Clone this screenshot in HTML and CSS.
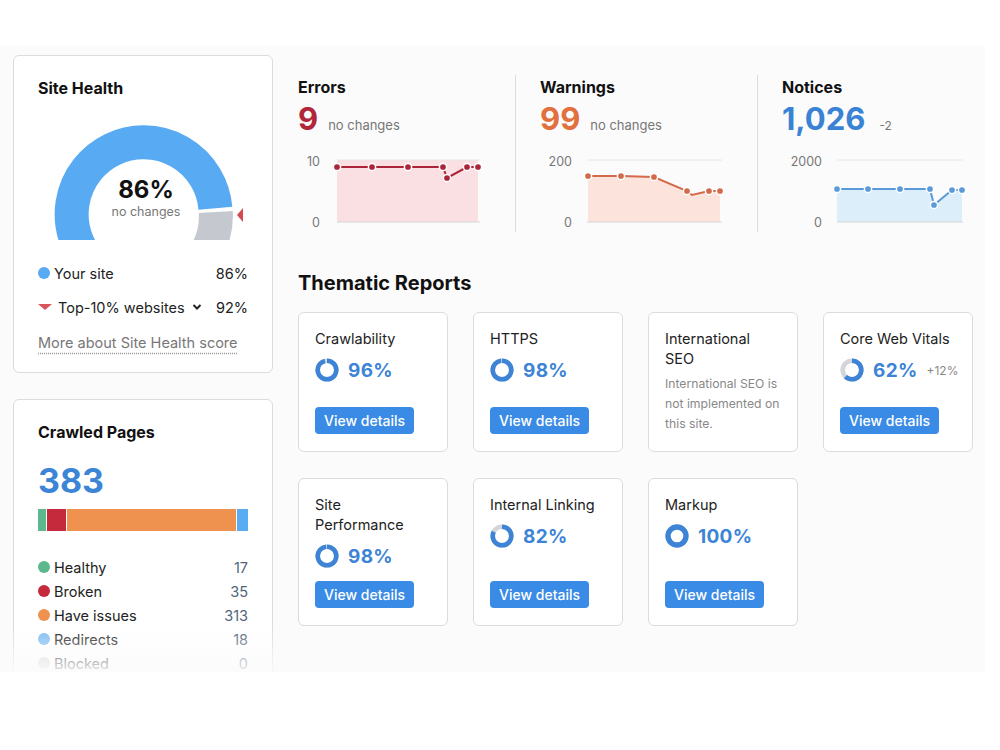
FILE: index.html
```html
<!DOCTYPE html>
<html lang="en">
<head>
  <meta charset="UTF-8">
  <meta name="viewport" content="width=device-width, initial-scale=1.0">
  <title>Site Audit</title>
  <link rel="stylesheet" href="styles.css">
</head>
<body>
<div class="shot">
  <div class="layout">
    <aside class="side">
      <section class="card health">
        <h3 class="card-title">Site Health</h3>
        <svg class="gauge" width="210" height="120" viewBox="0 0 210 120">
          <path d="M56.3 146.7 A72 72 0 1 1 177.4 88.2" fill="none" stroke="#58aaf3" stroke-width="34"/>
          <path d="M177.8 92 A72 72 0 0 1 157 146.7" fill="none" stroke="#c5c8cf" stroke-width="34"/>
          <polygon points="199,95 205,88 205,102" fill="#d44b4f"/>
          <text x="108" y="78" text-anchor="middle" class="gauge-value">86%</text>
          <text x="108" y="96" text-anchor="middle" class="gauge-sub">no changes</text>
        </svg>
        <div class="legend-row tall">
          <span class="dot" style="background:#58aaf3"></span>
          <span class="legend-name">Your site</span>
          <span class="legend-value">86%</span>
        </div>
        <div class="legend-row tall">
          <svg class="tri" width="14" height="8" viewBox="0 0 14 8"><polygon points="0,1 14,1 7,7" fill="#d9545c"/></svg>
          <span class="legend-name">Top-10% websites</span>
          <svg class="chev" width="10" height="8" viewBox="0 0 10 8"><path d="M1.5 2 L5 5.5 L8.5 2" fill="none" stroke="#222" stroke-width="2"/></svg>
          <span class="legend-value">92%</span>
        </div>
        <a class="more" href="#">More about Site Health score</a>
      </section>

      <section class="card crawled">
        <h3 class="card-title">Crawled Pages</h3>
        <div class="big-num">383</div>
        <div class="pages-bar">
          <span style="width:8px;background:#5cb98e"></span>
          <span style="width:19px;background:#c42a3b"></span>
          <span style="width:169px;background:#f0924f"></span>
          <span style="width:11px;background:#5aacf2"></span>
        </div>
        <div class="legend">
          <div class="legend-row"><span class="dot" style="background:#5cb98e"></span><span class="legend-name">Healthy</span><span class="legend-value num">17</span></div>
          <div class="legend-row"><span class="dot" style="background:#c42a3b"></span><span class="legend-name">Broken</span><span class="legend-value num">35</span></div>
          <div class="legend-row"><span class="dot" style="background:#f0924f"></span><span class="legend-name">Have issues</span><span class="legend-value num">313</span></div>
          <div class="legend-row"><span class="dot" style="background:#7dbcf2"></span><span class="legend-name">Redirects</span><span class="legend-value num">18</span></div>
          <div class="legend-row"><span class="dot" style="background:#d6d6d6"></span><span class="legend-name">Blocked</span><span class="legend-value num">0</span></div>
        </div>
      </section>
    </aside>

    <main class="main">
      <div class="stats">
        <div class="stat">
          <h3 class="stat-title">Errors</h3>
          <div class="stat-line"><span class="stat-num errors">9</span><span class="stat-sub">no changes</span></div>
          <svg class="chart" width="190" height="80" viewBox="0 0 190 80">
            <rect x="39" y="8" width="141" height="62" fill="#fbe0e3"/>
            <line x1="39" y1="8" x2="182" y2="8" stroke="#e6e6e6"/>
            <line x1="39" y1="70" x2="182" y2="70" stroke="#d6d6d6"/>
            <text x="22" y="14" text-anchor="end">10</text>
            <text x="22" y="75" text-anchor="end">0</text>
            <g stroke="#ab2539" fill="#ab2539">
              <polyline points="39,15 74,15 110,15 145,15 149,26 169,15 180,15" fill="none" stroke-width="2"/>
              <g stroke="#fff" stroke-width="1.5">
                <circle cx="39" cy="15" r="3.6"/><circle cx="74" cy="15" r="3.6"/><circle cx="110" cy="15" r="3.6"/>
                <circle cx="145" cy="15" r="3.6"/><circle cx="149" cy="26" r="3.6"/><circle cx="169" cy="15" r="3.6"/>
                <circle cx="180" cy="15" r="3.6"/>
              </g>
            </g>
          </svg>
        </div>
        <div class="stat">
          <h3 class="stat-title">Warnings</h3>
          <div class="stat-line"><span class="stat-num warnings">99</span><span class="stat-sub">no changes</span></div>
          <svg class="chart" width="190" height="80" viewBox="0 0 190 80">
            <polygon points="48,24 81,24 114,25 147,39 152,43 169,39 180,39 180,70 48,70" fill="#fce4dc"/>
            <line x1="47" y1="8" x2="182" y2="8" stroke="#e6e6e6"/>
            <line x1="47" y1="70" x2="182" y2="70" stroke="#d6d6d6"/>
            <text x="32" y="14" text-anchor="end">200</text>
            <text x="32" y="75" text-anchor="end">0</text>
            <g stroke="#d06a4b" fill="#d06a4b">
              <polyline points="48,24 81,24 114,25 147,39 152,43 169,39 180,39" fill="none" stroke-width="2"/>
              <g stroke="#fff" stroke-width="1.5">
                <circle cx="48" cy="24" r="3.6"/><circle cx="81" cy="24" r="3.6"/><circle cx="114" cy="25" r="3.6"/>
                <circle cx="147" cy="39" r="3.6"/><circle cx="169" cy="39" r="3.6"/><circle cx="180" cy="39" r="3.6"/>
              </g>
            </g>
          </svg>
        </div>
        <div class="stat">
          <h3 class="stat-title">Notices</h3>
          <div class="stat-line"><span class="stat-num notices">1,026</span><span class="stat-sub small">-2</span></div>
          <svg class="chart" width="190" height="80" viewBox="0 0 190 80">
            <polygon points="55,37 86,37 118,37 148,37 152,53 170,38 180,38 180,70 55,70" fill="#ddeefb"/>
            <line x1="55" y1="8" x2="181" y2="8" stroke="#e6e6e6"/>
            <line x1="55" y1="70" x2="181" y2="70" stroke="#d6d6d6"/>
            <text x="40" y="14" text-anchor="end">2000</text>
            <text x="40" y="75" text-anchor="end">0</text>
            <g stroke="#5a9ad8" fill="#5a9ad8">
              <polyline points="55,37 86,37 118,37 148,37 152,53 170,38 180,38" fill="none" stroke-width="2"/>
              <g stroke="#fff" stroke-width="1.5">
                <circle cx="55" cy="37" r="3.6"/><circle cx="86" cy="37" r="3.6"/><circle cx="118" cy="37" r="3.6"/>
                <circle cx="148" cy="37" r="3.6"/><circle cx="152" cy="53" r="3.6"/><circle cx="170" cy="38" r="3.6"/>
                <circle cx="180" cy="38" r="3.6"/>
              </g>
            </g>
          </svg>
        </div>
      </div>

      <h2 class="section-title">Thematic Reports</h2>
      <div class="reports">
        <div class="report card">
          <div class="report-title">Crawlability</div>
          <div class="score">
            <svg class="ring" width="24" height="24" viewBox="0 0 24 24"><circle cx="12" cy="12" r="9.3" class="track"/><circle cx="12" cy="12" r="9.3" class="fill" stroke-dasharray="56 58.4"/></svg>
            <span class="score-value">96%</span>
          </div>
          <button class="btn">View details</button>
        </div>
        <div class="report card">
          <div class="report-title">HTTPS</div>
          <div class="score">
            <svg class="ring" width="24" height="24" viewBox="0 0 24 24"><circle cx="12" cy="12" r="9.3" class="track"/><circle cx="12" cy="12" r="9.3" class="fill" stroke-dasharray="57.2 58.4"/></svg>
            <span class="score-value">98%</span>
          </div>
          <button class="btn">View details</button>
        </div>
        <div class="report card">
          <div class="report-title">International SEO</div>
          <p class="report-desc">International SEO is not implemented on this site.</p>
        </div>
        <div class="report card">
          <div class="report-title">Core Web Vitals</div>
          <div class="score">
            <svg class="ring" width="24" height="24" viewBox="0 0 24 24"><circle cx="12" cy="12" r="9.3" class="track"/><circle cx="12" cy="12" r="9.3" class="fill" stroke-dasharray="36.2 58.4"/></svg>
            <span class="score-value">62%</span>
            <span class="score-delta">+12%</span>
          </div>
          <button class="btn">View details</button>
        </div>
        <div class="report card">
          <div class="report-title">Site Performance</div>
          <div class="score">
            <svg class="ring" width="24" height="24" viewBox="0 0 24 24"><circle cx="12" cy="12" r="9.3" class="track"/><circle cx="12" cy="12" r="9.3" class="fill" stroke-dasharray="57.2 58.4"/></svg>
            <span class="score-value">98%</span>
          </div>
          <button class="btn">View details</button>
        </div>
        <div class="report card">
          <div class="report-title">Internal Linking</div>
          <div class="score">
            <svg class="ring" width="24" height="24" viewBox="0 0 24 24"><circle cx="12" cy="12" r="9.3" class="track"/><circle cx="12" cy="12" r="9.3" class="fill" stroke-dasharray="47.9 58.4"/></svg>
            <span class="score-value">82%</span>
          </div>
          <button class="btn">View details</button>
        </div>
        <div class="report card">
          <div class="report-title">Markup</div>
          <div class="score">
            <svg class="ring" width="24" height="24" viewBox="0 0 24 24"><circle cx="12" cy="12" r="9" class="fill full"/></svg>
            <span class="score-value">100%</span>
          </div>
          <button class="btn">View details</button>
        </div>
      </div>
    </main>
  </div>
  <div class="fade"></div>
</div>
</body>
</html>
```

FILE: styles.css
```css
body {
  margin: 0;
  background: #fff;
  font-family: Inter, "Noto Sans", sans-serif;
  color: #222;
}

.shot {
  position: relative;
  margin-top: 45px;
  width: 985px;
  height: 627px;
  background: #fbfbfb;
  overflow: hidden;
}

.layout {
  display: flex;
  gap: 25px;
  padding: 10px 0 0 13px;
}

.side {
  width: 260px;
  display: flex;
  flex-direction: column;
  gap: 26px;
}

.card {
  background: #fff;
  border: 1px solid #dcdcdc;
  border-radius: 6px;
  box-sizing: border-box;
}

.card-title {
  margin: 0;
  font-size: 16px;
  line-height: 22px;
  font-weight: 700;
  color: #111;
}

/* site health */
.health {
  padding: 21px 24px 19px;
}

.gauge {
  display: block;
  margin-top: 21px;
  overflow: hidden;
}

.gauge-value {
  font-size: 24px;
  font-weight: 700;
  fill: #111;
}

.gauge-sub {
  font-size: 12.5px;
  fill: #777;
}

.health .gauge + .legend-row {
  margin-top: 16px;
}

.legend-row {
  display: flex;
  align-items: center;
  height: 24px;
  font-size: 14.5px;
}

.legend-row.tall {
  height: 34px;
}

.dot {
  width: 12px;
  height: 12px;
  border-radius: 50%;
  margin-right: 4px;
  flex: none;
}

.tri {
  margin-right: 6px;
}

.chev {
  margin-left: 7px;
}

.legend-value {
  margin-left: auto;
  color: #222;
}

.legend-value.num {
  color: #51657a;
}

.more {
  display: inline-block;
  margin-top: 9px;
  font-size: 14.5px;
  line-height: 20px;
  color: #777;
  text-decoration: underline dotted #999;
  text-underline-offset: 5px;
}

/* crawled pages */
.crawled {
  padding: 21px 24px 40px;
}

.big-num {
  margin-top: 18px;
  font-size: 34px;
  line-height: 40px;
  font-weight: 700;
  color: #3c85d6;
}

.pages-bar {
  display: flex;
  gap: 1px;
  height: 22px;
  margin-top: 8px;
}

.legend {
  margin-top: 24px;
}

/* main column */
.main {
  width: 675px;
}

.stats {
  display: grid;
  grid-template-columns: 217px 242px 216px;
  margin-top: 20px;
}

.stat {
  padding-top: 1px;
}

.stat + .stat {
  border-left: 1px solid #dcdcdc;
  padding-left: 24px;
}

.stat-title {
  margin: 0;
  font-size: 16px;
  line-height: 22px;
  font-weight: 700;
  color: #111;
}

.stat-line {
  display: flex;
  align-items: baseline;
  gap: 10px;
  height: 42px;
  line-height: 42px;
}

.stat-num {
  font-size: 31px;
  font-weight: 700;
}

.stat-num.errors { color: #b0263b; }
.stat-num.warnings { color: #e2703f; }
.stat-num.notices { color: #3a82d3; }

.stat-sub {
  font-size: 13px;
  color: #777;
}

.stat-sub.small {
  font-size: 12px;
  margin-left: 4px;
}

.chart {
  display: block;
  margin-top: 12px;
  font-size: 12.5px;
}

.chart text {
  fill: #777;
  stroke: none;
}

.section-title {
  margin: 37px 0 15px;
  font-size: 20px;
  line-height: 28px;
  font-weight: 700;
  color: #111;
}

.reports {
  display: grid;
  grid-template-columns: repeat(4, 150px);
  column-gap: 25px;
  row-gap: 26px;
}

.report {
  display: flex;
  flex-direction: column;
  padding: 16px 12px 17px 16px;
}

.report-title {
  max-width: 112px;
  font-size: 14.5px;
  line-height: 20px;
  color: #222;
}

.score {
  display: flex;
  align-items: center;
  gap: 9px;
  height: 24px;
  margin: 9px 0 13px;
}

.ring {
  transform: rotate(-90deg);
  flex: none;
}

.ring circle {
  fill: none;
  stroke-width: 4.6;
}

.ring .track {
  stroke: #d3d5da;
}

.ring .fill {
  stroke: #3d84d6;
}

.ring .full {
  stroke-width: 5.4;
}

.score-value {
  font-size: 19px;
  font-weight: 700;
  color: #3c84d6;
  letter-spacing: 0.3px;
}

.score-delta {
  font-size: 12px;
  color: #888;
}

.report-desc {
  margin: 5px 0 0;
  font-size: 12.2px;
  line-height: 20px;
  color: #888;
}

.btn {
  margin-top: auto;
  align-self: flex-start;
  height: 27px;
  padding: 0 9px;
  border: none;
  border-radius: 4px;
  background: #3a8be5;
  color: #fff;
  font-family: inherit;
  font-size: 14px;
  font-weight: 500;
  cursor: pointer;
}

.fade {
  position: absolute;
  left: 0;
  right: 0;
  bottom: 0;
  height: 45px;
  background: linear-gradient(rgba(251, 251, 251, 0), rgba(251, 251, 251, 0.9));
}
```
